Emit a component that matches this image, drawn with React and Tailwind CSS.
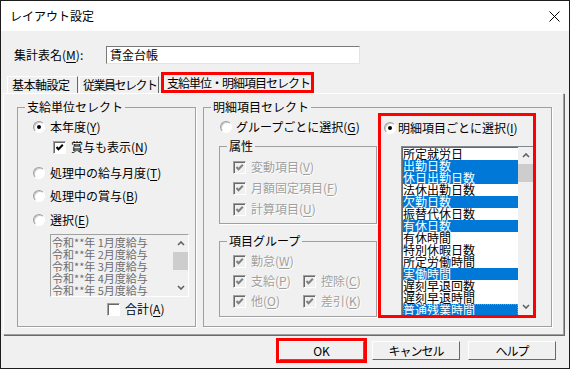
const rightItems = [
  ['所定就労日', false],
  ['出勤日数', true],
  ['休日出勤日数', true],
  ['法休出勤日数', false],
  ['欠勤日数', true],
  ['振替代休日数', false],
  ['有休日数', true],
  ['有休時間', false],
  ['特別休暇日数', false],
  ['所定労働時間', false],
  ['実働時間', true],
  ['遅刻早退回数', false],
  ['遅刻早退時間', false],
  ['普通残業時間', true],
];

const leftItems = ['令和**年 1月度給与', '令和**年 2月度給与', '令和**年 3月度給与', '令和**年 4月度給与', '令和**年 5月度給与'];

const dim = 'text-[#a0a0a0] [text-shadow:1px_1px_0_#fff]';

function Radio({ on }) {
  return (
    <span className="flex h-[12px] w-[12px] shrink-0 items-center justify-center rounded-full border border-t-[#a0a0a0] border-l-[#a0a0a0] border-r-white border-b-white bg-white shadow-[inset_1px_1px_0_#c8c8c8]">
      {on && <span className="h-[4px] w-[4px] rounded-full bg-black" />}
    </span>
  );
}

function Check({ on, disabled }) {
  return (
    <span
      className={`flex h-[13px] w-[13px] shrink-0 items-center justify-center border border-t-[#a0a0a0] border-l-[#a0a0a0] border-r-white border-b-white ${
        disabled ? 'bg-[#f0f0f0] shadow-[inset_1px_1px_0_#696969]' : 'bg-white shadow-[inset_1px_1px_0_#696969]'
      }`}
    >
      {on && (
        <svg width="9" height="9" viewBox="0 0 9 9">
          <path d="M1.5 4 L3.5 6.2 L7.8 1.8" fill="none" stroke={disabled ? '#808080' : '#000'} strokeWidth="2" />
        </svg>
      )}
    </span>
  );
}

function Acc({ t, k, tail = '' }) {
  return (
    <>
      {t}(<u className="underline-offset-2">{k}</u>){tail}
    </>
  );
}

function Group({ label, className, children }) {
  return (
    <fieldset className={`border border-[#a0a0a0] shadow-[1px_1px_0_#fff] ${className}`}>
      <legend className="ml-[7px] px-[2px] text-[12px] leading-[14px]">{label}</legend>
      {children}
    </fieldset>
  );
}

function Chevron({ up, color = '#606060' }) {
  return (
    <svg width="8" height="5" viewBox="0 0 8 5">
      <path d={up ? 'M1 4 L4 1 L7 4' : 'M1 1 L4 4 L7 1'} fill="none" stroke={color} strokeWidth="1.6" />
    </svg>
  );
}

function ScrollBar() {
  return (
    <div className="flex w-[15px] shrink-0 flex-col bg-[#f0f0f0]">
      <div className="flex h-[17px] items-center justify-center">
        <Chevron up />
      </div>
      <div className="flex-1">
        <div className="h-[18px] bg-[#cdcdcd]" />
      </div>
      <div className="flex h-[17px] items-center justify-center">
        <Chevron />
      </div>
    </div>
  );
}

export default function App() {
  return (
    <div className="flex h-[369px] w-[570px] flex-col border border-[#1c1c1c] bg-[#f0f0f0] font-['Noto_Sans_CJK_JP',sans-serif] text-[12px] leading-[16px] text-black">
      <div className="flex h-[30px] shrink-0 items-center justify-between bg-white pl-[9px] pr-[9px]">
        <span className="text-[12px]">レイアウト設定</span>
        <svg width="11" height="11" viewBox="0 0 11 11">
          <path d="M0.5 0.5 L10.5 10.5 M10.5 0.5 L0.5 10.5" stroke="#000" strokeWidth="1" />
        </svg>
      </div>

      <div className="flex items-center pl-[13px] pt-[15px]">
        <span className="w-[92px]">
          <Acc t="集計表名" k="M" tail=":" />
        </span>
        <div className="flex h-[18px] w-[254px] items-center border border-t-[#7a7a7a] border-l-[#7a7a7a] border-r-[#e3e3e3] border-b-[#e3e3e3] bg-white pl-[3px]">
          賃金台帳
        </div>
      </div>

      <div className="mt-[8px] flex h-[21px] items-end whitespace-nowrap pl-[6px]">
        <div className="flex h-[17px] w-[71px] items-center border-l border-t border-r border-l-white border-t-white border-r-[#696969] pl-[4px] tracking-[-0.5px]">
          基本軸設定
        </div>
        <div className="ml-[1px] flex h-[17px] w-[80px] items-center border-l border-t border-r border-l-white border-t-white border-r-[#696969] pl-[3px] tracking-[-1.5px]">
          従業員セレクト
        </div>
        <div className="ml-[2px] flex h-[21px] w-[153px] items-center border-3 border-[#ff0000] pl-[3px] tracking-[-1px]">
          支給単位・明細項目セレクト
        </div>
      </div>

      <div className="ml-[2px] mr-[5px] flex h-[242px] shrink-0 gap-[7px] border border-t-white border-l-white border-r-[#a0a0a0] border-b-[#a0a0a0] pl-[13px] pt-[6px] shadow-[1px_1px_0_#696969]">
        <Group label="支給単位セレクト" className="h-[227px] w-[179px]">
          <div className="mt-[5px] flex h-[16px] items-center pl-[15px]">
            <Radio on />
            <span className="ml-[5px]">
              <Acc t="本年度" k="Y" />
            </span>
          </div>
          <div className="mt-[4px] flex h-[16px] items-center pl-[35px]">
            <Check on />
            <span className="ml-[5px]">
              <Acc t="賞与も表示" k="N" />
            </span>
          </div>
          <div className="mt-[10px] flex h-[16px] items-center pl-[15px]">
            <Radio />
            <span className="ml-[5px]">
              <Acc t="処理中の給与月度" k="T" />
            </span>
          </div>
          <div className="mt-[7px] flex h-[16px] items-center pl-[15px]">
            <Radio />
            <span className="ml-[5px]">
              <Acc t="処理中の賞与" k="B" />
            </span>
          </div>
          <div className="mt-[8px] flex h-[16px] items-center pl-[15px]">
            <Radio />
            <span className="ml-[5px]">
              <Acc t="選択" k="E" />
            </span>
          </div>
          <div className="ml-[32px] mt-[6px] flex h-[63px] w-[139px] overflow-hidden border border-t-[#a0a0a0] border-l-[#a0a0a0] border-r-white border-b-white bg-[#f0f0f0]">
            <div className="flex-1 pl-[1px] pt-[1px] text-[#6d6d6d]">
              {leftItems.map((t) => (
                <div key={t} className="h-[12px] whitespace-nowrap text-[11px] leading-[12px]">
                  {t}
                </div>
              ))}
            </div>
            <ScrollBar />
          </div>
          <div className="mt-[4px] flex h-[16px] items-center pl-[89px]">
            <Check />
            <span className="ml-[5px]">
              <Acc t="合計" k="A" />
            </span>
          </div>
        </Group>

        <Group label="明細項目セレクト" className="h-[227px] w-[349px]">
          <div className="flex">
            <div className="ml-[15px] w-[158px]">
              <div className="mt-[5px] flex h-[16px] items-center pl-[1px]">
                <Radio />
                <span className="ml-[4px]">
                  <Acc t="グループごとに選択" k="G" />
                </span>
              </div>
              <Group label="属性" className="mt-[4px] h-[85px]">
                <div className={`mt-[6px] flex h-[16px] items-center pl-[13px] ${dim}`}>
                  <Check on disabled />
                  <span className="ml-[5px]">
                    <Acc t="変動項目" k="V" />
                  </span>
                </div>
                <div className={`mt-[5px] flex h-[16px] items-center pl-[13px] ${dim}`}>
                  <Check on disabled />
                  <span className="ml-[5px]">
                    <Acc t="月額固定項目" k="F" />
                  </span>
                </div>
                <div className={`mt-[5px] flex h-[16px] items-center pl-[13px] ${dim}`}>
                  <Check on disabled />
                  <span className="ml-[5px]">
                    <Acc t="計算項目" k="U" />
                  </span>
                </div>
              </Group>
              <Group label="項目グループ" className="mt-[10px] h-[83px]">
                <div className={`mt-[5px] flex h-[16px] items-center pl-[13px] ${dim}`}>
                  <Check on disabled />
                  <span className="ml-[5px]">
                    <Acc t="勤怠" k="W" />
                  </span>
                </div>
                <div className={`mt-[4px] flex h-[16px] items-center pl-[13px] ${dim}`}>
                  <div className="flex w-[70px] items-center">
                    <Check on disabled />
                    <span className="ml-[5px]">
                      <Acc t="支給" k="P" />
                    </span>
                  </div>
                  <Check on disabled />
                  <span className="ml-[5px]">
                    <Acc t="控除" k="C" />
                  </span>
                </div>
                <div className={`mt-[4px] flex h-[16px] items-center pl-[13px] ${dim}`}>
                  <div className="flex w-[70px] items-center">
                    <Check on disabled />
                    <span className="ml-[5px]">
                      <Acc t="他" k="O" />
                    </span>
                  </div>
                  <Check on disabled />
                  <span className="ml-[5px]">
                    <Acc t="差引" k="K" />
                  </span>
                </div>
              </Group>
            </div>

            <div className="-mt-[1px] ml-[1px] h-[205px] w-[158px] overflow-hidden border-3 border-[#ff0000]">
              <div className="mt-[4px] flex h-[16px] items-center pl-[3px]">
                <Radio on />
                <span className="ml-[2px]">
                  <Acc t="明細項目ごとに選択" k="I" />
                </span>
              </div>
              <div className="ml-[20px] mt-[10px] flex h-[169px] w-[132px] overflow-hidden border-l border-t border-[#828790] bg-white shadow-[inset_1px_1px_0_#696969]">
                <div className="flex-1 pl-[1px] pt-[1px]">
                  {rightItems.map(([t, sel], i) => (
                    <div
                      key={t}
                      className={`h-[12px] whitespace-nowrap text-[12px] leading-[12px] ${sel ? 'bg-[#0078d7] text-white' : ''} ${
                        i === rightItems.length - 1 ? 'outline-1 -outline-offset-1 outline-dotted outline-[#d08040]' : ''
                      }`}
                    >
                      {t}
                    </div>
                  ))}
                </div>
                <ScrollBar />
              </div>
            </div>
          </div>
        </Group>
      </div>

      <div className="mt-[6px] flex justify-end gap-[8px] pr-[13px]">
        <button className="flex h-[19px] w-[85px] items-center justify-center border border-t-white border-l-white border-r-[#696969] border-b-[#696969] bg-[#f0f0f0] ring-3 ring-[#ff0000]">
          OK
        </button>
        <button className="flex h-[19px] w-[88px] items-center justify-center border border-t-white border-l-white border-r-[#696969] border-b-[#696969] bg-[#f0f0f0] tracking-[-1px]">
          キャンセル
        </button>
        <button className="flex h-[19px] w-[88px] items-center justify-center border border-t-white border-l-white border-r-[#696969] border-b-[#696969] bg-[#f0f0f0] tracking-[-1px]">
          ヘルプ
        </button>
      </div>
    </div>
  );
}
